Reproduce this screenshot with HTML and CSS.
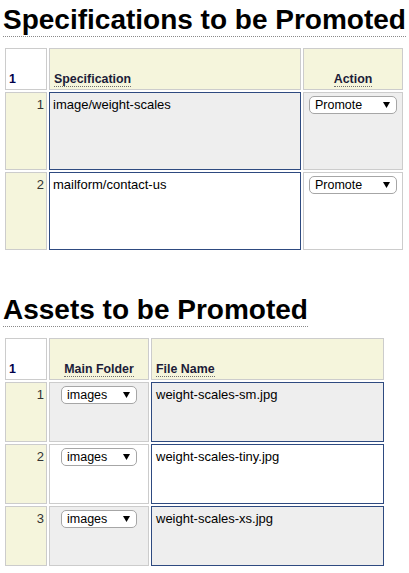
FILE: index.html
```html
<!DOCTYPE html>
<html>
<head>
<meta charset="utf-8">
<link rel="stylesheet" href="styles.css">
</head>
<body>
<div class="page">
  <h1 class="title">Specifications to be Promoted</h1>
  <table class="grid spec-table">
    <thead>
      <tr class="head-row">
        <th class="c-num">1</th>
        <th class="c-spec"><span class="lbl">Specification</span></th>
        <th class="c-action center"><span class="lbl">Action</span></th>
      </tr>
    </thead>
    <tbody>
      <tr class="spec-row odd">
        <td class="num">1</td>
        <td class="val spec-val">image/weight-scales</td>
        <td class="plain action"><div class="select sel-promote"><span>Promote</span><svg class="arrow" width="7" height="6" viewBox="0 0 7 6"><polygon points="0,0 7,0 3.5,6" fill="#000"/></svg></div></td>
      </tr>
      <tr class="spec-row even">
        <td class="num">2</td>
        <td class="val spec-val">mailform/contact-us</td>
        <td class="plain action"><div class="select sel-promote"><span>Promote</span><svg class="arrow" width="7" height="6" viewBox="0 0 7 6"><polygon points="0,0 7,0 3.5,6" fill="#000"/></svg></div></td>
      </tr>
    </tbody>
  </table>

  <h1 class="title second">Assets to be Promoted</h1>
  <table class="grid asset-table">
    <thead>
      <tr class="head-row">
        <th class="c-num">1</th>
        <th class="c-folder center"><span class="lbl">Main Folder</span></th>
        <th class="c-file"><span class="lbl">File Name</span></th>
      </tr>
    </thead>
    <tbody>
      <tr class="asset-row odd">
        <td class="num">1</td>
        <td class="plain folder"><div class="select sel-images"><span>images</span><svg class="arrow" width="7" height="6" viewBox="0 0 7 6"><polygon points="0,0 7,0 3.5,6" fill="#000"/></svg></div></td>
        <td class="val file-val">weight-scales-sm.jpg</td>
      </tr>
      <tr class="asset-row even">
        <td class="num">2</td>
        <td class="plain folder"><div class="select sel-images"><span>images</span><svg class="arrow" width="7" height="6" viewBox="0 0 7 6"><polygon points="0,0 7,0 3.5,6" fill="#000"/></svg></div></td>
        <td class="val file-val">weight-scales-tiny.jpg</td>
      </tr>
      <tr class="asset-row odd">
        <td class="num">3</td>
        <td class="plain folder"><div class="select sel-images"><span>images</span><svg class="arrow" width="7" height="6" viewBox="0 0 7 6"><polygon points="0,0 7,0 3.5,6" fill="#000"/></svg></div></td>
        <td class="val file-val">weight-scales-xs.jpg</td>
      </tr>
    </tbody>
  </table>
</div>
</body>
</html>
```

FILE: styles.css
```css
html, body {
  margin: 0;
  padding: 0;
  background: #ffffff;
}

.page {
  padding: 4px 3px 0 3px;
  font-family: "Liberation Sans", Arial, sans-serif;
  color: #000;
}

.title {
  display: block;
  width: fit-content;
  margin: 0;
  font-size: 28px;
  line-height: 32px;
  font-weight: bold;
  color: #000;
  border-bottom: 1px dotted #8a8a8a;
}

.title.second {
  margin-top: 42px;
}

.grid {
  margin-top: 9px;
  border-collapse: separate;
  border-spacing: 2px;
  table-layout: fixed;
}

.spec-table { width: 402px; }
.asset-table { width: 383px; }

.grid th,
.grid td {
  box-sizing: border-box;
  border: 1px solid #cccccc;
}

.grid th {
  background: #f5f5dc;
  vertical-align: bottom;
  text-align: left;
  font-size: 12.4px;
  font-weight: bold;
  color: #1c1c38;
  padding: 0 4px 3px 4px;
}

.grid th.c-num {
  background: #ffffff;
  color: #00004a;
  padding-left: 3px;
}

.grid th.center { text-align: center; }

.lbl {
  border-bottom: 1px dotted #6f6f6f;
}

.head-row { height: 42px; }
.spec-row { height: 78px; }
.asset-row { height: 60px; }

.c-num { width: 42px; }
.c-spec { width: 252px; }
.c-action { width: 100px; }
.c-folder { width: 100px; }
.c-file { width: 233px; }

.grid td {
  vertical-align: top;
  font-size: 13px;
}

.grid td.num {
  background: #f5f5dc;
  text-align: right;
  color: #333333;
  padding: 4px 2px 0 2px;
}

.grid td.val {
  border-color: #2e4a80;
  color: #000;
  padding: 4px 3px 0 3px;
}

.grid td.file-val {
  padding-left: 4px;
}

.grid td.plain {
  padding: 3px 5px 0 5px;
}

.grid td.folder {
  text-align: center;
}

.odd td.val,
.odd td.plain {
  background: #eeeeee;
}

.even td.val,
.even td.plain {
  background: #ffffff;
}

.select {
  box-sizing: border-box;
  display: inline-flex;
  align-items: center;
  justify-content: space-between;
  height: 18px;
  padding: 0 6px 0 5px;
  border: 1px solid #a6a6a6;
  border-radius: 5px;
  background: #ffffff;
  font-size: 12.5px;
  color: #000;
  text-align: left;
  vertical-align: top;
}

.sel-promote { width: 88px; }
.sel-images { width: 76px; }

.arrow {
  display: block;
  flex: none;
}
```
